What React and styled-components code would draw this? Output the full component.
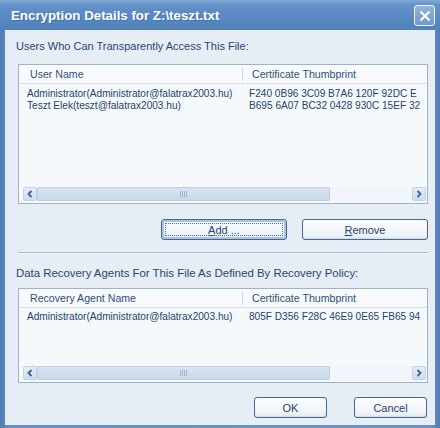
import React from "react";
import styled, { createGlobalStyle } from "styled-components";

const Global = createGlobalStyle`
  html, body { margin: 0; padding: 0; background: #5a84b8; }
  body { font-family: "Liberation Sans", Arial, sans-serif; }
`;

const Window = styled.div`
  width: 440px;
  height: 428px;
  display: flex;
  flex-direction: column;
  background: linear-gradient(90deg, #4f7cb4 0%, #6690c3 2%, #6a93c5 98%, #4f7cb4 100%);
  box-sizing: border-box;
  overflow: hidden;
`;

const TitleBar = styled.div`
  height: 30px;
  flex: none;
  display: flex;
  align-items: center;
  justify-content: space-between;
  padding: 0 5px 0 11px;
  background: linear-gradient(180deg, #82a7d3 0%, #6291c8 18%, #5888c1 60%, #5282bc 100%);
`;

const Title = styled.span`
  color: #ffffff;
  font-family: "Liberation Sans", Arial, sans-serif;
  font-weight: bold;
  font-size: 13.3px;
  text-shadow: 1px 1px 0 rgba(30, 60, 110, 0.35);
`;

const CloseButton = styled.div`
  width: 21px;
  height: 21px;
  box-sizing: border-box;
  border: 1px solid #eef3fa;
  border-radius: 3px;
  background: linear-gradient(180deg, #93b4da 0%, #7399c9 100%);
  display: flex;
  align-items: center;
  justify-content: center;
  margin-top: 1px;
`;

const Body = styled.div`
  flex: 1;
  margin: 0 5px 3px 5px;
  background: #e7edf5;
  padding: 9px 7px 0 11px;
  display: flex;
  flex-direction: column;
  color: #284770;
  font-size: 11px;
`;

const Label = styled.div`
  height: 14px;
  line-height: 14px;
  font-size: ${(p) => p.$size || 11}px;
  margin-top: ${(p) => p.$top || 0}px;
  white-space: nowrap;
`;

const ListBox = styled.div`
  margin-top: ${(p) => p.$top}px;
  margin-left: 2px;
  height: ${(p) => p.$h}px;
  box-sizing: border-box;
  border: 1px solid #9cb2cd;
  background: #f6f9fc;
  display: flex;
  flex-direction: column;
  overflow: hidden;
`;

const HeaderRow = styled.div`
  height: 18px;
  flex: none;
  display: flex;
  align-items: center;
  border-bottom: 1px solid #d6e0ec;
  background: #f8fafd;
  font-size: 10.6px;
  color: #31507a;
`;

const HeaderCell = styled.div`
  width: ${(p) => (p.$w ? `${p.$w}px` : "auto")};
  flex: ${(p) => (p.$w ? "none" : 1)};
  box-sizing: border-box;
  padding-left: ${(p) => p.$pad}px;
  height: 14px;
  line-height: 14px;
  white-space: nowrap;
  overflow: hidden;
  border-right: ${(p) => (p.$w ? "1px solid #ccd8e6" : "none")};
`;

const Rows = styled.div`
  padding-top: ${(p) => p.$top}px;
  flex: 1;
  display: flex;
  flex-direction: column;
`;

const Row = styled.div`
  display: flex;
  height: 12px;
  line-height: 12px;
  font-size: 10.1px;
  color: #24436c;
`;

const Cell = styled.div`
  width: ${(p) => (p.$w ? `${p.$w}px` : "auto")};
  flex: ${(p) => (p.$w ? "none" : 1)};
  box-sizing: border-box;
  padding-left: ${(p) => p.$pad}px;
  white-space: nowrap;
  overflow: hidden;
`;

const ScrollBar = styled.div`
  flex: none;
  height: 14px;
  margin: 0 1px 2px 4px;
  display: flex;
  background: #f2f6fa;
`;

const ArrowBox = styled.div`
  width: 14px;
  height: 14px;
  flex: none;
  box-sizing: border-box;
  border: 1px solid #c2d3e6;
  border-radius: 2px;
  background: linear-gradient(180deg, #e3ecf6 0%, #cddced 100%);
  display: flex;
  align-items: center;
  justify-content: center;
`;

const Thumb = styled.div`
  width: 293px;
  height: 14px;
  flex: none;
  box-sizing: border-box;
  border: 1px solid #bccee3;
  border-radius: 2px;
  background: linear-gradient(180deg, #d8e4f1 0%, #c9d9eb 100%);
  display: flex;
  align-items: center;
  justify-content: center;
`;

const Track = styled.div`
  flex: 1;
`;

const Grip = styled.div`
  width: 7px;
  height: 6px;
  background: repeating-linear-gradient(90deg, #9fb5cf 0 1px, transparent 1px 2px);
`;

const ButtonRow = styled.div`
  display: flex;
  justify-content: flex-end;
  gap: ${(p) => p.$gap}px;
  margin-top: ${(p) => p.$top}px;
  margin-right: ${(p) => p.$right || 0}px;
`;

const Button = styled.div`
  width: ${(p) => p.$w}px;
  height: 21px;
  box-sizing: border-box;
  border: 1px solid #46678f;
  border-radius: 3px;
  background: linear-gradient(180deg, #fbfcfe 0%, #eef3f9 85%, #d9e3ef 100%);
  box-shadow: ${(p) =>
    p.$default ? "inset 0 0 0 2px #a9c3e3" : "inset 0 -1px 0 #d3deeb"};
  display: flex;
  align-items: center;
  justify-content: center;
  font-size: 11px;
  color: #25446d;
  position: relative;
`;

const FocusRing = styled.span`
  position: absolute;
  inset: 3px;
  border: 1px dotted #4c6a92;
`;

const Key = styled.span`
  text-decoration: underline;
  text-underline-offset: 1px;
`;

const Separator = styled.div`
  margin: ${(p) => p.$top}px 0 0 2px;
  height: 1px;
  background: #a7b9d0;
  border-bottom: 1px solid #f5f8fb;
`;

const Chevron = ({ dir }) => (
  <svg width="8" height="8" viewBox="0 0 8 8">
    <path
      d={dir === "left" ? "M5.5 1 L2.5 4 L5.5 7" : "M2.5 1 L5.5 4 L2.5 7"}
      fill="none"
      stroke="#3c5f92"
      strokeWidth="1.8"
    />
  </svg>
);

const CloseX = () => (
  <svg width="12" height="12" viewBox="0 0 12 12">
    <path d="M1.5 1.5 L10.5 10.5 M10.5 1.5 L1.5 10.5" stroke="#ffffff" strokeWidth="1.9" />
  </svg>
);

const HScroll = () => (
  <ScrollBar>
    <ArrowBox>
      <Chevron dir="left" />
    </ArrowBox>
    <Thumb>
      <Grip />
    </Thumb>
    <Track />
    <ArrowBox>
      <Chevron dir="right" />
    </ArrowBox>
  </ScrollBar>
);

const CertList = ({ top, height, nameTitle, rows, rowsTop }) => (
  <ListBox $top={top} $h={height}>
    <HeaderRow>
      <HeaderCell $w={224} $pad={11}>{nameTitle}</HeaderCell>
      <HeaderCell $pad={9}>Certificate Thumbprint</HeaderCell>
    </HeaderRow>
    <Rows $top={rowsTop}>
      {rows.map(([name, thumb]) => (
        <Row key={name}>
          <Cell $w={224} $pad={8}>{name}</Cell>
          <Cell $pad={6}>{thumb}</Cell>
        </Row>
      ))}
    </Rows>
    <HScroll />
  </ListBox>
);

const users = [
  ["Administrator(Administrator@falatrax2003.hu)", "F240 0B96 3C09 B7A6 120F 92DC E"],
  ["Teszt Elek(teszt@falatrax2003.hu)", "B695 6A07 BC32 0428 930C 15EF 32"],
];

const agents = [
  ["Administrator(Administrator@falatrax2003.hu)", "805F D356 F28C 46E9 0E65 FB65 94"],
];

export default function App() {
  return (
    <>
      <Global />
      <Window>
        <TitleBar>
          <Title>Encryption Details for Z:\teszt.txt</Title>
          <CloseButton>
            <CloseX />
          </CloseButton>
        </TitleBar>
        <Body>
          <Label>Users Who Can Transparently Access This File:</Label>
          <CertList top={11} height={140} nameTitle="User Name" rows={users} rowsTop={4} />
          <ButtonRow $top={15} $gap={15}>
            <Button $w={126} $default>
              <FocusRing />
              <span>
                <Key>A</Key>dd ...
              </span>
            </Button>
            <Button $w={126}>
              <span>
                <Key>R</Key>emove
              </span>
            </Button>
          </ButtonRow>
          <Separator $top={12} />
          <Label $top={12} $size={11.4}>
            Data Recovery Agents For This File As Defined By Recovery Policy:
          </Label>
          <CertList
            top={8}
            height={95}
            nameTitle="Recovery Agent Name"
            rows={agents}
            rowsTop={3}
          />
          <ButtonRow $top={14} $gap={27} $right={1}>
            <Button $w={73}>OK</Button>
            <Button $w={73}>Cancel</Button>
          </ButtonRow>
        </Body>
      </Window>
    </>
  );
}
